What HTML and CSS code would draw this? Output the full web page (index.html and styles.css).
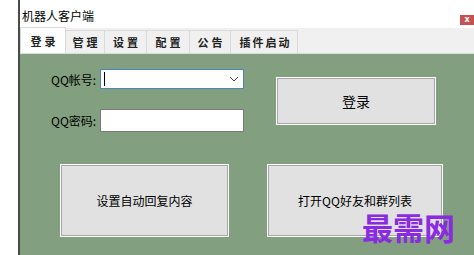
FILE: index.html
```html
<!DOCTYPE html>
<html lang="zh-CN">
  <head>
    <meta charset="UTF-8" />
    <title>机器人客户端</title>
    <link rel="stylesheet" href="styles.css">
  </head>
  <body>
    <div class="window">
      <div class="titlebar">
        <span class="caption">机器人客户端</span>
        <span class="close">x</span>
      </div>

      <div class="tabs">
        <span class="tab active">登录</span>
        <span class="tab">管理</span>
        <span class="tab">设置</span>
        <span class="tab">配置</span>
        <span class="tab">公告</span>
        <span class="tab">插件启动</span>
      </div>

      <div class="panel">
        <div class="top">
          <div class="form">
            <div class="row">
              <span class="label">QQ帐号:</span>
              <div class="combo">
                <span class="caret"></span>
                <svg class="arrow" width="10" height="6" viewBox="0 0 10 6">
                  <path d="M1 1 L5 5 L9 1" fill="none" stroke="#444" stroke-width="1"/>
                </svg>
              </div>
            </div>
            <div class="row">
              <span class="label">QQ密码:</span>
              <div class="field"></div>
            </div>
          </div>
          <button class="btn login">登录</button>
        </div>

        <div class="bottom">
          <button class="btn big">设置自动回复内容</button>
          <button class="btn big">打开QQ好友和群列表</button>
        </div>

        <span class="mark">最需网</span>
      </div>
    </div>
  </body>
</html>
```

FILE: styles.css
```css
* {
  margin: 0;
  padding: 0;
  box-sizing: border-box;
}

html, body {
  overflow: hidden;
}

body {
  background: #ffffff;
  font-family: "Noto Sans CJK SC", "Noto Sans", sans-serif;
  font-size: 12px;
  color: #000;
}

.window {
  margin-left: 18px;
  height: 255px;
  border-left: 2px solid #4a4a4a;
  display: flex;
  flex-direction: column;
}

.titlebar {
  height: 28px;
  display: flex;
  align-items: center;
  justify-content: space-between;
  padding-left: 2px;
  background: #fff;
}

.caption {
  font-size: 12px;
  line-height: 12px;
  margin-top: 4px;
}

.close {
  width: 14px;
  height: 10px;
  margin-top: 12px;
  background: #c75050;
  color: #fff;
  font-family: "DejaVu Sans", sans-serif;
  font-size: 8px;
  font-weight: bold;
  line-height: 10px;
  text-align: center;
}

.tabs {
  height: 26px;
  background: #f0f0f0;
  display: flex;
  align-items: flex-end;
  border-bottom: 1px solid #dcdcdc;
}

.tab {
  height: 23px;
  border: 1px solid #d9d9d9;
  border-bottom: none;
  border-left: none;
  background: #f0f0f0;
  font-size: 11px;
  font-weight: bold;
  color: #222;
  letter-spacing: 3px;
  white-space: nowrap;
  padding-left: 3px;
  display: flex;
  align-items: center;
  justify-content: center;
}

.tab.active {
  height: 26px;
  width: 46px;
  background: #fff;
  border-left: 1px solid #d9d9d9;
}

.tab:nth-child(2) { width: 39px; }
.tab:nth-child(3) { width: 42px; }
.tab:nth-child(4) { width: 43px; }
.tab:nth-child(5) { width: 41px; }
.tab:nth-child(6) { width: 67px; letter-spacing: 2px; }

.panel {
  flex: 1;
  background: #82a07f;
  position: relative;
  padding: 15px 0 0 0;
}

.top {
  display: flex;
  align-items: flex-start;
}

.form {
  display: flex;
  flex-direction: column;
  gap: 20px;
  padding-left: 31px;
}

.row {
  display: flex;
  align-items: center;
}

.label {
  width: 49px;
  font-size: 12px;
}

.combo {
  width: 144px;
  height: 20px;
  background: #fff;
  border: 1px solid #4a86b8;
  display: flex;
  align-items: center;
  justify-content: space-between;
  padding: 0 4px 0 3px;
}

.caret {
  width: 1px;
  height: 14px;
  background: #000;
}

.field {
  width: 144px;
  height: 23px;
  background: #fff;
  border: 1px solid #7a7a7a;
}

.btn {
  background: #e1e1e1;
  border: 1px solid #a8a8a8;
  outline: 1px solid #fff;
  font-family: "Noto Sans CJK SC", "Noto Sans", sans-serif;
  font-size: 12px;
  color: #000;
}

.login {
  width: 158px;
  height: 46px;
  margin-left: 33px;
  margin-top: 9px;
  font-size: 14px;
}

.bottom {
  display: flex;
  gap: 40px;
  padding-left: 41px;
  margin-top: 33px;
}

.big {
  width: 167px;
  height: 71px;
}

.big + .big {
  width: 174px;
}

.mark {
  position: absolute;
  left: 342px;
  top: 150px;
  font-family: "Liberation Serif", "Noto Sans CJK SC", serif;
  font-size: 31px;
  font-weight: bold;
  color: #8a2be2;
}
```
